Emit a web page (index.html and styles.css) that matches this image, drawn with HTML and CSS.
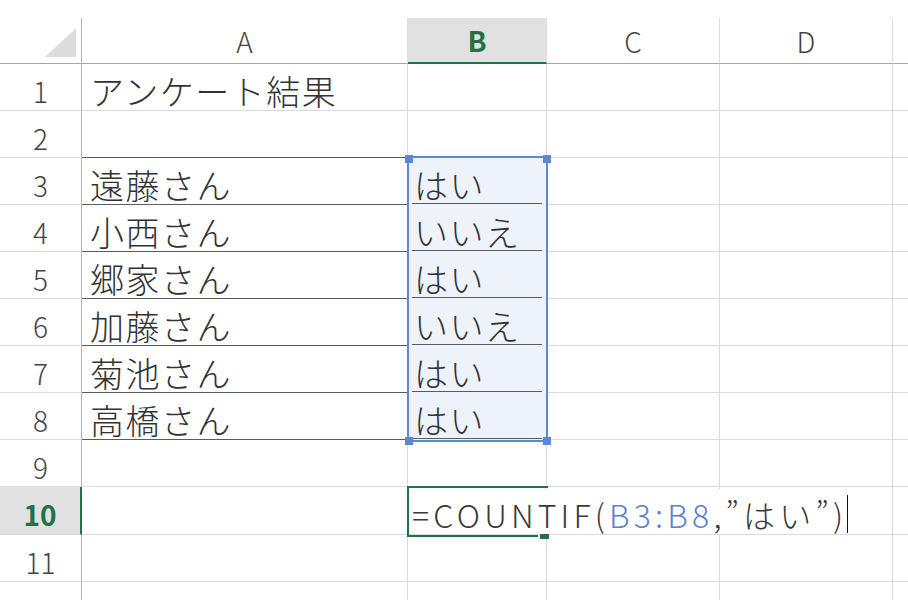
FILE: index.html
```html
<!DOCTYPE html>
<html lang="ja">
<head>
<meta charset="utf-8">
<title>アンケート結果</title>
<link rel="stylesheet" href="styles.css">
</head>
<body>
<div class="sheet">
  <div class="corner"><svg class="tri" width="82" height="46" viewBox="0 0 82 46"><polygon points="45,39 76,10 76,39" fill="#dcdcdc"/></svg></div>
  <div class="ch">A</div><div class="ch ch-sel">B</div><div class="ch">C</div><div class="ch">D</div><div class="ch ch-end"></div>

  <div class="rh">1</div><div class="c ca">アンケート結果</div><div class="c"></div><div class="c"></div><div class="c"></div><div class="c ce"></div>
  <div class="rh">2</div><div class="c ca bd"></div><div class="c"></div><div class="c"></div><div class="c"></div><div class="c ce"></div>
  <div class="rh">3</div><div class="c ca bd">遠藤さん</div><div class="c cb">はい</div><div class="c"></div><div class="c"></div><div class="c ce"></div>
  <div class="rh">4</div><div class="c ca bd">小西さん</div><div class="c cb">いいえ</div><div class="c"></div><div class="c"></div><div class="c ce"></div>
  <div class="rh">5</div><div class="c ca bd">郷家さん</div><div class="c cb">はい</div><div class="c"></div><div class="c"></div><div class="c ce"></div>
  <div class="rh">6</div><div class="c ca bd">加藤さん</div><div class="c cb">いいえ</div><div class="c"></div><div class="c"></div><div class="c ce"></div>
  <div class="rh">7</div><div class="c ca bd">菊池さん</div><div class="c cb">はい</div><div class="c"></div><div class="c"></div><div class="c ce"></div>
  <div class="rh">8</div><div class="c ca bd">高橋さん</div><div class="c cb">はい</div><div class="c"></div><div class="c"></div><div class="c ce"></div>
  <div class="rh">9</div><div class="c ca"></div><div class="c"></div><div class="c"></div><div class="c"></div><div class="c ce"></div>
  <div class="rh rh-sel">10</div><div class="c ca"></div><div class="c"></div><div class="c"></div><div class="c"></div><div class="c ce"></div>
  <div class="rh">11</div><div class="c ca"></div><div class="c"></div><div class="c"></div><div class="c"></div><div class="c ce"></div>
  <div class="rh"></div><div class="c ca"></div><div class="c"></div><div class="c"></div><div class="c"></div><div class="c ce"></div>

  <div class="selection"></div>
  <div class="handle h-tl"></div><div class="handle h-tr"></div><div class="handle h-bl"></div><div class="handle h-br"></div>

  <div class="editor">=COUNTIF(<span class="ref">B3:B8</span>,”はい”)<span class="caret"></span></div>
  <div class="ac ac-top"></div><div class="ac ac-left"></div><div class="ac ac-bottom"></div><div class="ac ac-fill"></div>
</div>
</body>
</html>
```

FILE: styles.css
```css
html, body {
  margin: 0;
  padding: 0;
  background: #ffffff;
  overflow: hidden;
}

.sheet {
  position: relative;
  margin-top: 18px;
  display: grid;
  grid-template-columns: 82px 326px 139px 173px 173px 15px;
  grid-template-rows: 46px repeat(9, 47px) 48px 47px 47px;
  font-family: "Noto Sans CJK JP", "Noto Sans", sans-serif;
  color: #333333;
}

.corner {
  box-sizing: border-box;
  border-right: 1px solid #b4b4b4;
  border-bottom: 1px solid #a8a8a8;
  overflow: hidden;
}
.tri { display: block; }

.ch {
  box-sizing: border-box;
  border-right: 1px solid #dedede;
  border-bottom: 1px solid #a8a8a8;
  display: flex;
  align-items: center;
  justify-content: center;
  font-size: 28px;
  font-weight: 300;
  color: #444444;
}
.ch-sel {
  background: #e1e1e1;
  border-bottom: 2px solid #217346;
  color: #217346;
  font-weight: 700;
}
.ch-end { border-right: none; }

.rh {
  box-sizing: border-box;
  border-right: 1px solid #b4b4b4;
  border-bottom: 1px solid #dadada;
  display: flex;
  align-items: center;
  justify-content: center;
  padding-top: 7px;
  font-size: 28px;
  font-weight: 300;
  color: #444444;
}
.rh-sel {
  background: #e1e1e1;
  border-right: 2px solid #217346;
  color: #217346;
  font-weight: 700;
}

.c {
  box-sizing: border-box;
  border-right: 1px solid #dadada;
  border-bottom: 1px solid #dadada;
  display: flex;
  align-items: center;
  padding-top: 7px;
  font-size: 34px;
  letter-spacing: 1.5px;
  font-weight: 300;
  white-space: nowrap;
  color: #333333;
}
.ca { padding-left: 8px; }
.ce { border-right: none; }
.bd { border-bottom-color: #5a5a5a; }
.cb {
  padding-left: 6px;
  background: linear-gradient(#5a5a5a, #5a5a5a) no-repeat 4px 100% / calc(100% - 8px) 1px, #eef2fb;
  border-bottom-color: #eef2fb;
}

.selection {
  position: absolute;
  left: 407px;
  top: 138px;
  width: 141px;
  height: 286px;
  box-sizing: border-box;
  border: 2px solid #5d87d5;
}
.handle {
  position: absolute;
  width: 8px;
  height: 8px;
  background: #5d87d5;
}
.h-tl { left: 405px; top: 137px; }
.h-tr { left: 543px; top: 137px; }
.h-bl { left: 405px; top: 419px; }
.h-br { left: 543px; top: 419px; }

.editor {
  position: absolute;
  left: 409px;
  top: 471px;
  width: 439px;
  height: 45px;
  box-sizing: border-box;
  background: #ffffff;
  padding-left: 3px;
  padding-top: 4px;
  display: flex;
  align-items: center;
  font-size: 32px;
  letter-spacing: 4.2px;
  font-weight: 300;
  color: #3a3a3a;
  white-space: nowrap;
}
.ref { color: #5b80cf; }
.caret {
  display: inline-block;
  width: 0;
  height: 38px;
  border-left: 1px solid #111111;
  margin-left: 0;
}

.ac {
  position: absolute;
  background: #217346;
}
.ac-top { left: 407px; top: 468px; width: 141px; height: 2px; }
.ac-left { left: 407px; top: 468px; width: 2px; height: 51px; }
.ac-bottom { left: 407px; top: 517px; width: 131px; height: 2px; }
.ac-fill { left: 540px; top: 516px; width: 9px; height: 5px; }
```
